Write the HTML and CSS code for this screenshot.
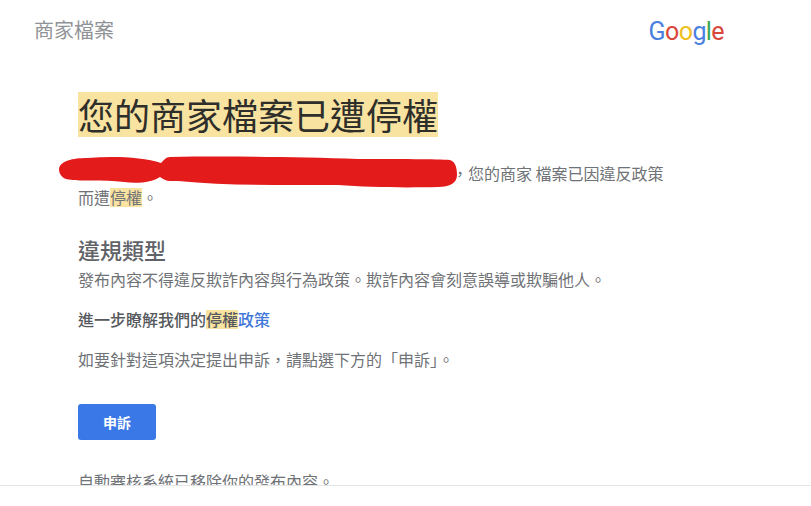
FILE: index.html
```html
<!DOCTYPE html>
<html lang="zh-Hant">
<head>
<meta charset="utf-8">
<title>商家檔案</title>
<link rel="stylesheet" href="styles.css">
</head>
<body>
<div class="page">
  <header class="topbar">
    <div class="product">商家檔案</div>
    <div class="logo" aria-label="Google"><span class="blue">G</span><span class="red">o</span><span class="yellow">o</span><span class="blue">g</span><span class="green">l</span><span class="red">e</span></div>
  </header>
  <main class="content">
    <h1 class="title"><span class="mark">您的商家檔案已遭停權</span></h1>
    <p class="notice">
      <span class="redacted-space"></span>，您的商家 檔案已因違反政策<br>而遭<span class="mark">停權</span>。
      <svg class="scribble" viewBox="0 0 400 34" aria-hidden="true"><path d="M1 14 C2 6 14 3 30 3 C55 1 85 2 103 8 C106 5 108 2 112 2 C170 1 240 2 300 4 C340 4 380 4 392 5 C398 7 399 14 399 20 C399 28 392 32 380 32 C340 33 310 32 280 30 C230 30 170 31 120 26 L112 26 C108 26 105 24 102 22 C95 27 80 29 66 27 C45 24 20 27 8 24 C3 22 1 18 1 14 Z"/></svg>
    </p>
    <section class="violation">
      <h2 class="section-title">違規類型</h2>
      <p class="body-line">發布內容不得違反欺詐內容與行為政策。欺詐內容會刻意誤導或欺騙他人。</p>
      <p class="learn-more">進一步瞭解我們的<span class="mark">停權</span><a class="policy" href="#">政策</a></p>
      <p class="body-line">如要針對這項決定提出申訴，請點選下方的「申訴」。</p>
    </section>
    <a class="appeal" href="#">申訴</a>
    <p class="body-line after">自動審核系統已移除你的發布內容。</p>
  </main>
  <footer class="bottom"></footer>
</div>
</body>
</html>
```

FILE: styles.css
```css
* { box-sizing: border-box; }
html, body { margin: 0; padding: 0; background: #fff; }
body { font-family: "Noto Sans CJK TC", "Liberation Sans", sans-serif; }
.page { width: 811px; height: 506px; display: flex; flex-direction: column; overflow: hidden; }
.topbar { flex: none; height: 72px; display: flex; justify-content: space-between; align-items: flex-start; padding: 17px 87px 0 34px; }
.product { font-size: 20px; line-height: 26px; color: #8f9296; }
.logo { font-family: Roboto, sans-serif; font-size: 25px; font-weight: 400; line-height: 30px; letter-spacing: -0.6px; }
.blue { color: #4a80e0; }
.red { color: #d8473a; }
.yellow { color: #f0c020; }
.green { color: #3aa757; }
.content { flex: 1; min-height: 0; overflow: hidden; padding: 20px 0 0 78px; }
.title { margin: 0; font-size: 36px; font-weight: 400; line-height: 45px; color: #2e2e2a; }
.mark { background: #f9e3a1; display: inline-block; }
.notice { position: relative; margin: 24px 0 0; font-size: 16px; line-height: 24px; color: #6f7276; }
.notice .mark, .learn-more .mark { line-height: 19px; }
.redacted-space { display: inline-block; width: 374px; }
.scribble { position: absolute; left: -20px; top: -6px; width: 400px; height: 34px; fill: #e31b1b; }
.violation { margin-top: 26px; }
.section-title { margin: 0; font-size: 22px; line-height: 28px; font-weight: 500; color: #5f6368; }
.body-line { margin: 0; font-size: 16px; line-height: 24px; color: #6f7276; }
.section-title + .body-line { margin-top: 4px; }
.learn-more { margin: 16px 0; font-size: 16px; line-height: 24px; font-weight: 500; color: #55585c; }
.policy { color: #3f78d8; text-decoration: none; }
.appeal { display: flex; align-items: center; justify-content: center; width: 78px; height: 36px; margin-top: 33px; border-radius: 3px; background: #3b78e7; color: #fff; font-size: 14px; font-weight: 700; text-decoration: none; }
.after { margin-top: 29px; }
.bottom { flex: none; height: 21px; background: #fff; border-top: 1px solid #e4e4e4; }
```
